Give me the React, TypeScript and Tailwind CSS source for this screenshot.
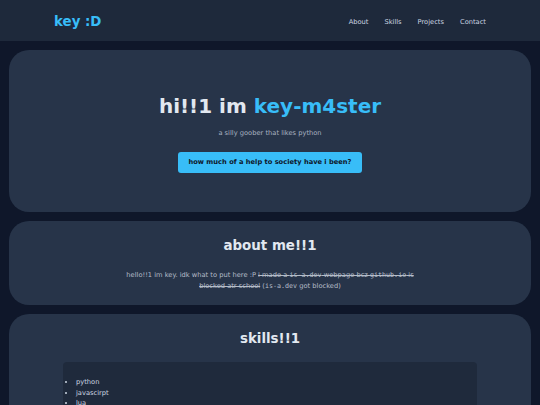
import React from "react";

const font = { fontFamily: '"DejaVu Sans", Verdana, sans-serif' };

function Mono({ children }: { children: React.ReactNode }) {
  return <span className="font-['DejaVu_Sans_Mono',monospace]">{children}</span>;
}

export default function App() {
  return (
    <div style={font} className="min-h-[405px] bg-[#0f172a] text-[#e2e8f0]">
      <header className="h-[41px] bg-[#1e293b] pt-[3px]">
        <div className="mx-auto flex h-full w-[432px] items-center justify-between">
          <span className="text-[13.4px] font-bold text-[#38bdf8]">key :D</span>
          <nav className="flex gap-[16px] text-[6.7px] text-[#cbd5e1]">
            <a>About</a>
            <a>Skills</a>
            <a>Projects</a>
            <a>Contact</a>
          </nav>
        </div>
      </header>

      <main className="flex flex-col gap-[9px] px-[9px] pt-[9px]">
        <section className="flex flex-col items-center rounded-[20px] bg-[#273449] pt-[44px] pb-[39px]">
          <h1 className="text-[20px] font-bold leading-[24px]">
            hi!!1 im <span className="text-[#38bdf8]">key-m4ster</span>
          </h1>
          <p className="mt-[10px] text-[6.7px] leading-[10px] text-[#a7b1c0]">a silly goober that likes python</p>
          <button className="mt-[14px] h-[21px] w-[184px] rounded-[3px] bg-[#38bdf8] text-[6.7px] font-bold text-[#0f172a]">
            how much of a help to society have i been?
          </button>
        </section>

        <section className="flex flex-col items-center rounded-[20px] bg-[#273449] pt-[17px] pb-[13px]">
          <h2 className="text-[13.4px] font-bold leading-[16px]">about me!!1</h2>
          <p className="mt-[16px] w-[300px] text-center text-[6.7px] leading-[11px] text-[#b4bcc8]">
            hello!!1 im key. idk what to put here :P{" "}
            <s>
              i made a <Mono>is-a.dev</Mono> webpage bcz <Mono>github.io</Mono> is blocked atr school
            </s>{" "}
            (<Mono>is-a.dev</Mono> got blocked)
          </p>
        </section>

        <section className="flex flex-col items-center rounded-[20px] bg-[#273449] pt-[17px] pb-[20px]">
          <h2 className="text-[13.4px] font-bold leading-[16px]">skills!!1</h2>
          <div className="mt-[15px] w-[414px] rounded-[4px] bg-[#1f2a3c] pt-[15px] pb-[14px]">
            <ul className="list-disc pl-[13px] text-[6.7px] leading-[10.5px] text-[#cbd5e1]">
              <li>python</li>
              <li>javascirpt</li>
              <li>lua</li>
              <li>html</li>
              <li>css</li>
            </ul>
          </div>
        </section>
      </main>
    </div>
  );
}
